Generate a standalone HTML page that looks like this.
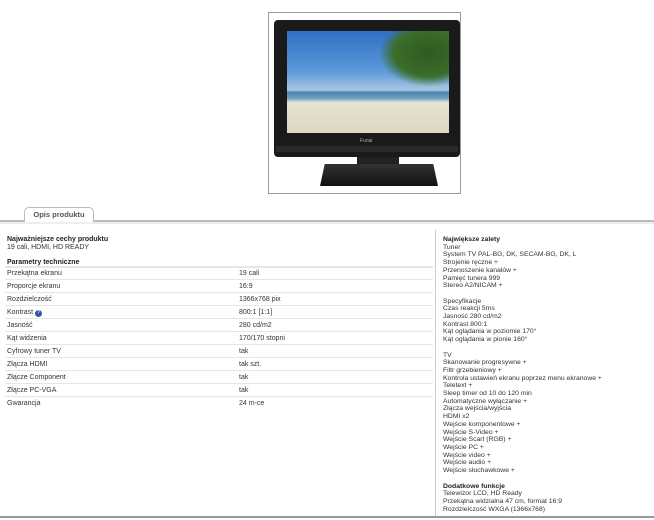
<!DOCTYPE html>
<html><head><meta charset="utf-8"><style>
*{margin:0;padding:0;box-sizing:border-box}
body{width:654px;height:520px;background:#fff;position:relative;overflow:hidden;font-family:"Liberation Sans",Arial,sans-serif;font-size:7px;color:#333}
.a{position:absolute;white-space:nowrap}
b{font-weight:bold;color:#222}
.row{position:absolute;left:5px;width:428px;height:13px;border-bottom:1.5px solid #e6e6e6;line-height:14px;padding-left:2px}
.row span{position:absolute;left:234px}
.r{position:absolute;left:443px;top:236px;line-height:7.7px;white-space:pre;font-size:6.8px}
</style></head><body>
<div class="a" style="left:268px;top:12px;width:193px;height:182px;border:1px solid #999;background:#fff"></div>
<div class="a" style="left:274px;top:20px;width:186px;height:137px;background:#1a1a1a;border-radius:4px"></div>
<div class="a" style="left:276px;top:146px;width:182px;height:6px;background:#2a2a2a"></div>
<div class="a" style="left:287px;top:31px;width:162px;height:102px;background:linear-gradient(#2f6fc4 0%,#5d9ad8 40%,#a9c8e0 58%,#4c86b0 60%,#6a9fc0 66%,#e8e2d2 70%,#ddd6c2 100%)"></div>
<div class="a" style="left:380px;top:31px;width:69px;height:55px;background:radial-gradient(ellipse at 70% 40%,#2f5a22 0%,#3b6d2a 50%,rgba(60,100,40,0) 72%)"></div>
<div class="a" style="left:357px;top:157px;width:42px;height:10px;background:#222"></div>
<div class="a" style="left:320px;top:164px;width:118px;height:22px;background:linear-gradient(#333,#111);clip-path:polygon(4% 0,96% 0,100% 100%,0 100%)"></div>
<div class="a" style="left:360px;top:138px;color:#aaa;font-size:5px">Funai</div>
<div class="a" style="left:0;top:220px;width:654px;height:2px;background:#bbb"></div>
<div class="a" style="left:0;top:222px;width:654px;height:2px;background:#eee"></div>
<div class="a" style="left:24px;top:207px;width:70px;height:15px;border:1px solid #bbb;border-bottom:none;border-radius:5px 5px 0 0;background:#fff;text-align:center;line-height:13px;font-weight:bold;color:#555;font-size:7.5px">Opis produktu</div>
<div class="a" style="left:435px;top:230px;width:1px;height:287px;background:#ccc"></div>
<div class="a" style="left:0;top:516px;width:654px;height:2px;background:#999"></div>
<div class="a" style="left:7px;top:236px;line-height:7.7px"><b>Najważniejsze cechy produktu</b><br>19 cali, HDMI, HD READY</div>
<div class="a" style="left:7px;top:259px"><b>Parametry techniczne</b></div>
<div class="a" style="left:5px;top:266px;width:428px;height:1.5px;background:#e6e6e6"></div>
<div class="row" style="top:267px">Przekątna ekranu<span>19 cali</span></div>
<div class="row" style="top:280px">Proporcje ekranu<span>16:9</span></div>
<div class="row" style="top:293px">Rozdzielczość<span>1366x768 pix</span></div>
<div class="row" style="top:306px">Kontrast <i style="display:inline-block;width:7px;height:7px;border-radius:50%;background:#2b5aa0;color:#fff;font-size:5px;line-height:7px;text-align:center;font-style:normal;vertical-align:0px">?</i><span>800:1 [1:1]</span></div>
<div class="row" style="top:319px">Jasność<span>280 cd/m2</span></div>
<div class="row" style="top:332px">Kąt widzenia<span>170/170 stopni</span></div>
<div class="row" style="top:345px">Cyfrowy tuner TV<span>tak</span></div>
<div class="row" style="top:358px">Złącza HDMI<span>tak szt.</span></div>
<div class="row" style="top:371px">Złącze Component<span>tak</span></div>
<div class="row" style="top:384px">Złącze PC-VGA<span>tak</span></div>
<div class="row" style="top:397px;border-bottom:none">Gwarancja<span>24 m-ce</span></div>
<div class="r"><b>Największe zalety</b>
Tuner
System TV PAL-BG, DK, SECAM-BG, DK, L
Strojenie ręczne +
Przenoszenie kanałów +
Pamięć tunera 999
Stereo A2/NICAM +

Specyfikacje
Czas reakcji 5ms
Jasność 280 cd/m2
Kontrast 800:1
Kąt oglądania w poziomie 170°
Kąt oglądania w pionie 160°

TV
Skanowanie progresywne +
Filtr grzebieniowy +
Kontrola ustawień ekranu poprzez menu ekranowe +
Teletext +
Sleep timer od 10 do 120 min
Automatyczne wyłączanie +
Złącza wejścia/wyjścia
HDMI x2
Wejście komponentowe +
Wejście S-Video +
Wejście Scart (RGB) +
Wejście PC +
Wejście video +
Wejście audio +
Wejście słuchawkowe +

<b>Dodatkowe funkcje</b>
Telewizor LCD, HD Ready
Przekątna widzialna 47 cm, format 16:9
Rozdzielczość WXGA (1366x768)</div>
</body></html>
